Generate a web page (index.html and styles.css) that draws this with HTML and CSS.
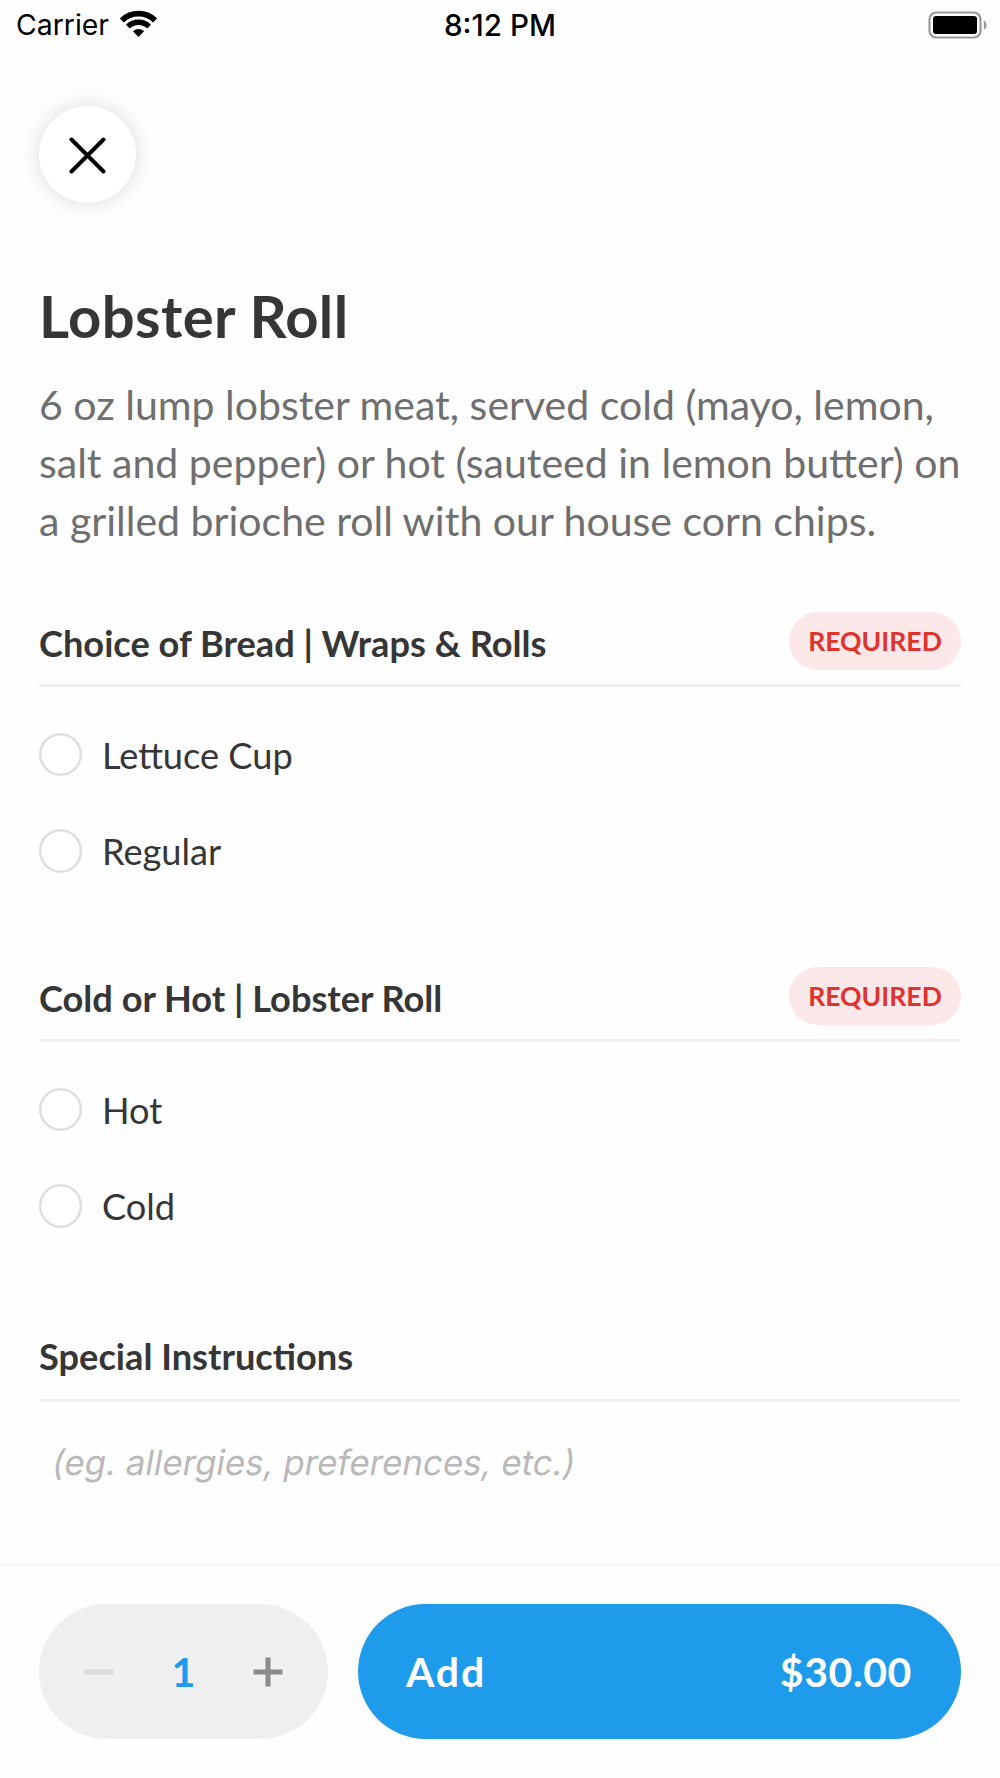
FILE: index.html
```html
<!DOCTYPE html>
<html lang="en">
<head>
<meta charset="UTF-8">
<meta name="viewport" content="width=device-width, initial-scale=1.0">
<title>Lobster Roll</title>
<link rel="stylesheet" href="styles.css">
</head>
<body>

<div class="screen">
    <div class="status-bar">
        <div class="status-left">
            <span class="carrier">Carrier</span>
            <svg class="wifi" viewBox="0 0 37 28" width="37" height="28">
                <path d="M1.9 10.4 A23.9 23.9 0 0 1 35.1 10.4" fill="none" stroke="#000" stroke-width="5.8"/>
                <path d="M7.9 16.6 A15.2 15.2 0 0 1 29.1 16.6" fill="none" stroke="#000" stroke-width="5.4"/>
                <path d="M12.9 21.3 Q18.5 16.6 24.1 21.3 L18.5 27 Z" fill="#000"/>
            </svg>
        </div>
        <span class="time">8:12 PM</span>
        <div class="status-right">
            <svg class="battery" viewBox="0 0 60 28" width="60" height="28">
                <rect x="1.5" y="1.5" width="51" height="25" rx="6.5" fill="none" stroke="#999" stroke-width="2.2"/>
                <rect x="5" y="5" width="44" height="18" rx="3" fill="#000"/>
                <path d="M55.8 9.2 Q58.8 11 58.8 14 Q58.8 17 55.8 18.8 Z" fill="#999"/>
            </svg>
        </div>
    </div>

    <div class="content">
        <button class="close-button" aria-label="Close">
            <svg viewBox="0 0 38 38" width="38" height="38">
                <path d="M2.5 3.5 L34.5 35.5 M34.5 3.5 L2.5 35.5" stroke="#000" stroke-width="4" stroke-linecap="round"/>
            </svg>
        </button>

        <h1 class="title">Lobster Roll</h1>
        <p class="description">6 oz lump lobster meat, served cold (mayo, lemon,<br>salt and pepper) or hot (sauteed in lemon butter) on<br>a grilled brioche roll with our house corn chips.</p>

        <section class="group">
            <div class="group-header">
                <h2>Choice of Bread | Wraps &amp; Rolls</h2>
                <span class="badge">REQUIRED</span>
            </div>
            <div class="options">
                <label class="option"><span class="radio"></span><span>Lettuce Cup</span></label>
                <label class="option"><span class="radio"></span><span>Regular</span></label>
            </div>
        </section>

        <section class="group">
            <div class="group-header">
                <h2>Cold or Hot | Lobster Roll</h2>
                <span class="badge">REQUIRED</span>
            </div>
            <div class="options">
                <label class="option"><span class="radio"></span><span>Hot</span></label>
                <label class="option"><span class="radio"></span><span>Cold</span></label>
            </div>
        </section>

        <section class="instructions">
            <div class="group-header">
                <h2>Special Instructions</h2>
            </div>
            <p class="placeholder">(eg. allergies, preferences, etc.)</p>
        </section>
    </div>

    <div class="footer">
        <div class="stepper">
            <svg viewBox="0 0 30 30" width="30" height="30">
                <path d="M0.5 15 H29.5" stroke="#dcdcdc" stroke-width="5"/>
            </svg>
            <span class="quantity">1</span>
            <svg viewBox="0 0 30 30" width="30" height="30">
                <path d="M0.5 15 H29.5 M15 0.5 V29.5" stroke="#8b8b8b" stroke-width="5"/>
            </svg>
        </div>
        <button class="add-button">
            <span>Add</span>
            <span class="price">$30.00</span>
        </button>
    </div>
</div>

</body>
</html>
```
FILE: styles.css
```css
* {
    box-sizing: border-box;
}
body {
    margin: 0;
    background: #fefefe;
    color: #363636;
    font-family: Lato, "Open Sans", sans-serif;
}
h1, h2, p {
    margin: 0;
}
svg {
    display: block;
}
button {
    border: none;
    padding: 0;
    font-family: inherit;
    cursor: pointer;
}
.screen {
    display: flex;
    flex-direction: column;
    width: 1000px;
    height: 1778px;
    overflow: hidden;
}

/* Status bar */
.status-bar {
    display: grid;
    grid-template-columns: 1fr auto 1fr;
    align-items: center;
    height: 48px;
    padding: 1px 12px 0;
    font-family: Inter, "Liberation Sans", sans-serif;
    font-size: 28.4px;
    line-height: 34px;
    color: #000;
}
.status-left {
    display: flex;
    gap: 11px;
    padding-left: 4px;
}
.carrier {
    padding-top: 1px;
}
.wifi {
    margin-top: 3px;
}
.time {
    font-size: 29.6px;
    font-weight: 500;
}
.status-right {
    display: flex;
    justify-content: flex-end;
}

.content {
    flex: 1;
    padding: 58px 39px 0;
}
.close-button {
    display: flex;
    align-items: center;
    justify-content: center;
    width: 97px;
    height: 97px;
    border-radius: 50%;
    background: #fff;
    box-shadow: 0 0 20px rgba(0, 0, 0, 0.14);
}
.title {
    margin-top: 77px;
    font-size: 58px;
    line-height: 72px;
    font-weight: 700;
    letter-spacing: 0.4px;
}
.description {
    margin-top: 23px;
    font-size: 41.04px;
    line-height: 58px;
    color: #6f6f6f;
    white-space: nowrap;
}

/* Option groups */
.group {
    height: 355px;
}
.description + .group {
    margin-top: 63px;
}
.group-header {
    display: flex;
    justify-content: space-between;
    align-items: flex-start;
    height: 75px;
    border-bottom: 3px solid #f0f0f0;
}
.group-header h2 {
    padding-top: 9px;
    font-size: 36.2px;
    line-height: 44px;
    font-weight: 700;
}
.badge {
    width: 172px;
    height: 58px;
    border-radius: 29px;
    background: #fde8e9;
    color: #e0332c;
    font-size: 26.6px;
    line-height: 58px;
    font-weight: 700;
    text-align: center;
}
.options {
    padding-top: 19px;
}
.option {
    display: flex;
    align-items: center;
    gap: 19.5px;
    height: 96.6px;
    font-size: 36.2px;
    line-height: 44px;
}
.option span:last-child {
    padding-top: 1px;
}
.radio {
    width: 43.4px;
    height: 43.4px;
    border-radius: 50%;
    background: #fff;
    box-shadow: inset 0 0 0 2.4px #ddd;
}
.instructions .group-header {
    height: 80px;
}
.instructions h2 {
    padding-top: 12px;
}
/* Upright face slanted, keeps the two-storey "a" */
.placeholder {
    padding: 36px 0 0 17px;
    font-family: Inter, "Liberation Sans", sans-serif;
    font-size: 34.8px;
    line-height: 48px;
    color: #b9b9b9;
    transform: skewX(-10deg);
}

/* Footer */
.footer {
    display: flex;
    gap: 30px;
    height: 214px;
    padding: 38px 39px 0;
    border-top: 2px solid #f8f8f8;
}
.stepper {
    display: flex;
    align-items: center;
    justify-content: space-between;
    width: 289px;
    height: 135px;
    padding: 0 45px;
    border-radius: 68px;
    background: #efefef;
}
.quantity {
    color: #1e9bea;
    font-size: 41px;
    font-weight: 700;
}
.add-button {
    display: flex;
    flex: 1;
    align-items: center;
    justify-content: space-between;
    height: 135px;
    padding: 0 49px 0 48px;
    border-radius: 68px;
    background: #1e9bea;
    color: #fff;
    font-size: 41px;
    font-weight: 700;
    letter-spacing: 1.8px;
}
.price {
    letter-spacing: 0.6px;
}
```
